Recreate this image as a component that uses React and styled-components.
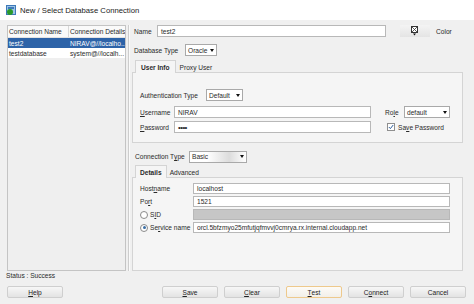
import React from 'react'
import styled, { createGlobalStyle } from 'styled-components'

//-- "New / Select Database Connection" dialog, shrunk to 474x304

const GlobalStyle = createGlobalStyle`
  html, body {
    margin: 0;
    padding: 0;
    background: #f0f0f0;
  }
  body {
    font-family: "Liberation Sans", Arial, sans-serif;
  }
`;

const Window = styled.div`
  width: 474px;
  height: 304px;
  background: #f0f0f0;
  display: flex;
  flex-direction: column;
  overflow: hidden;
  color: #2a2a2a;
  font-size: 6.6px;
`;

const TitleBar = styled.div`
  height: 20px;
  background: #fff;
  display: flex;
  align-items: center;
  gap: 3px;
  padding-left: 6px;
  font-size: 7.7px;
  color: #222;
`;

const Body = styled.div`
  flex: 1;
  display: flex;
  flex-direction: column;
  padding: 5px 8px 0 7px;
`;

const Main = styled.div`
  height: 246px;
  display: flex;
`;

const ListPanel = styled.div`
  width: 122px;
  border: 1px solid #c4c4c4;
  background: #efefef;
  display: flex;
  flex-direction: column;
`;

const ListHeader = styled.div`
  display: grid;
  grid-template-columns: 61px 1fr;
  height: 11px;
  background: #fafafa;
  border-bottom: 1px solid #e2e2e2;
  & > span {
    display: flex;
    align-items: center;
    padding-left: 1px;
    white-space: nowrap;
    overflow: hidden;
  }
  & > span:first-child {
    border-right: 1px solid #d8d8d8;
  }
`;

const ListRow = styled.div`
  display: grid;
  grid-template-columns: 61px 1fr;
  height: 10px;
  background: ${p => (p.selected ? '#2d63a8' : '#fff')};
  color: ${p => (p.selected ? '#fff' : '#2a2a2a')};
  & > span {
    display: flex;
    align-items: center;
    padding-left: 1px;
    white-space: nowrap;
    overflow: hidden;
  }
`;

const Splitter = styled.div`
  width: 6px;
  display: flex;
  justify-content: center;
  &::before {
    content: '';
    width: 1px;
    background: #cdcdcd;
    border-right: 1px solid #fafafa;
  }
`;

const RightPane = styled.div`
  flex: 1;
  display: flex;
  flex-direction: column;
`;

const Row = styled.div`
  display: flex;
  align-items: center;
  height: ${p => p.h || 12}px;
  margin-top: ${p => p.mt || 0}px;
  padding-left: ${p => p.pl || 0}px;
  flex-shrink: 0;
`;

const Label = styled.label`
  width: ${p => p.w}px;
  flex-shrink: 0;
  white-space: nowrap;
  display: flex;
  align-items: center;
`;

const Input = styled.div`
  width: ${p => p.w}px;
  height: ${p => p.h || 12}px;
  box-sizing: border-box;
  border: 1px solid #b8b8b8;
  background: ${p => (p.disabled ? '#c6c6c6' : '#fff')};
  display: flex;
  align-items: center;
  padding-left: 3px;
  white-space: nowrap;
  overflow: hidden;
  flex-shrink: 0;
`;

const Dots = styled.span`
  font-size: 8px;
  letter-spacing: -0.6px;
`;

const Combo = styled.div`
  width: ${p => p.w}px;
  height: 12px;
  box-sizing: border-box;
  border: 1px solid #a9a9a9;
  background: ${p => (p.shaded ? 'linear-gradient(90deg, #fff 30%, #dcdcdc 70%, #fff)' : '#fff')};
  display: flex;
  align-items: center;
  justify-content: space-between;
  gap: 2px;
  padding: 0 2px 0 2px;
  flex-shrink: 0;
  white-space: nowrap;
  &::after {
    content: '';
    flex-shrink: 0;
    border-left: 2.5px solid transparent;
    border-right: 2.5px solid transparent;
    border-top: 3px solid #111;
  }
`;

const ColorButton = styled.div`
  width: 30px;
  height: 12px;
  margin-left: 14px;
  background: linear-gradient(#f4f4f4, #e4e4e4);
  display: flex;
  align-items: center;
  justify-content: center;
  flex-shrink: 0;
`;

const TabBar = styled.div`
  display: flex;
  align-items: flex-end;
  height: 13px;
  margin-top: ${p => p.mt || 0}px;
  padding-left: 3px;
  flex-shrink: 0;
`;

const Tab = styled.div`
  height: ${p => (p.active ? 13 : 11)}px;
  box-sizing: border-box;
  display: flex;
  align-items: center;
  padding: 0 ${p => p.pad || 5}px;
  font-weight: ${p => (p.active ? 'bold' : 'normal')};
  border: ${p => (p.active ? '1px solid #d4d4d4' : '1px solid transparent')};
  border-bottom: none;
  background: ${p => (p.active ? '#f5f5f5' : 'transparent')};
  margin-bottom: ${p => (p.active ? -1 : 0)}px;
  position: relative;
  z-index: 1;
`;

const TabPanel = styled.div`
  height: ${p => (p.grow ? 'auto' : `${p.h}px`)};
  flex: ${p => (p.grow ? 1 : 'none')};
  margin-right: 3px;
  box-sizing: border-box;
  border: 1px solid #d4d4d4;
  background: #f5f5f5;
  padding: ${p => p.pt}px 0 0 7px;
  display: flex;
  flex-direction: column;
`;

const Check = styled.span`
  width: 8px;
  height: 8px;
  box-sizing: border-box;
  border: 1px solid #8f8f8f;
  background: #fff;
  display: inline-flex;
  align-items: center;
  justify-content: center;
  margin: 0 3px 0 16px;
`;

const Radio = styled.span`
  width: 8px;
  height: 8px;
  box-sizing: border-box;
  border-radius: 50%;
  border: 1px solid #8a8a8a;
  background: #fff;
  display: inline-flex;
  align-items: center;
  justify-content: center;
  margin-right: 2px;
  &::after {
    content: '';
    width: 3px;
    height: 3px;
    border-radius: 50%;
    background: ${p => (p.on ? '#3a6ea5' : 'transparent')};
  }
`;

const Status = styled.div`
  height: 9px;
  display: flex;
  align-items: center;
  margin-left: -1px;
`;

const ButtonBar = styled.div`
  display: flex;
  gap: 6px;
  margin-top: 6px;
`;

const Button = styled.div`
  width: 56px;
  height: 12px;
  box-sizing: border-box;
  border: 1px solid ${p => (p.focused ? '#eec98c' : '#cfcfcf')};
  border-radius: 2px;
  background: ${p => (p.focused ? 'linear-gradient(#fdfbf7, #f2efe9)' : 'linear-gradient(#f7f7f7, #e3e3e3)')};
  display: flex;
  align-items: center;
  justify-content: center;
  color: #222;
  margin-right: ${p => (p.spaced ? 93 : 0)}px;
`;

const TitleIcon = () => (
  <svg width="11" height="11" viewBox="0 0 11 11">
    <rect x="0.5" y="0.5" width="9" height="9" fill="#9cc3e6" stroke="#3d79b8" />
    <rect x="2" y="2" width="6" height="2" fill="#3d79b8" />
    <circle cx="4" cy="7" r="3" fill="#2a9a2a" />
  </svg>
);

const ColorIcon = () => (
  <svg width="10" height="10" viewBox="0 0 10 10">
    <rect x="1.5" y="0.5" width="6" height="6" fill="#fff" stroke="#333" />
    <path d="M2 1 L7 6 M7 1 L2 6" stroke="#333" strokeWidth="0.8" />
    <path d="M3 7.5 L6 7.5 L4.5 9.5 Z" fill="#111" />
  </svg>
);

const Tick = () => (
  <svg width="6" height="6" viewBox="0 0 6 6">
    <path d="M0.8 3 L2.4 4.6 L5.2 1" fill="none" stroke="#2f5f9e" strokeWidth="1" />
  </svg>
);

export default function App() {
  return (
    <>
      <GlobalStyle />
      <Window>
        <TitleBar>
          <TitleIcon />
          New / Select Database Connection
        </TitleBar>
        <Body>
          <Main>
            <ListPanel>
              <ListHeader>
                <span>Connection Name</span>
                <span>Connection Details</span>
              </ListHeader>
              <ListRow selected>
                <span>test2</span>
                <span>NIRAV@//localho...</span>
              </ListRow>
              <ListRow>
                <span>testdatabase</span>
                <span>system@//localh...</span>
              </ListRow>
            </ListPanel>
            <Splitter />
            <RightPane>
              <Row pl={2}>
                <Label w={23}>Name</Label>
                <Input w={229}>test2</Input>
                <ColorButton><ColorIcon /></ColorButton>
                <Label w={30} style={{ marginLeft: 6 }}>Color</Label>
              </Row>
              <Row pl={2} mt={7}>
                <Label w={51}>Database Type</Label>
                <Combo w={32}>Oracle</Combo>
              </Row>
              <TabBar mt={3}>
                <Tab active>User Info</Tab>
                <Tab pad={3}>Proxy User</Tab>
              </TabBar>
              <TabPanel h={71} pt={16}>
                <Row>
                  <Label w={66}>Authentication Type</Label>
                  <Combo w={37}>Default</Combo>
                </Row>
                <Row mt={5}>
                  <Label w={34}><u>U</u>sername</Label>
                  <Input w={197}>NIRAV</Input>
                  <Label w={19} style={{ marginLeft: 14 }}>Ro<u>l</u>e</Label>
                  <Combo w={46}>default</Combo>
                </Row>
                <Row mt={3}>
                  <Label w={34}><u>P</u>assword</Label>
                  <Input w={197}><Dots>••••</Dots></Input>
                  <Check><Tick /></Check>
                  Sa<u>v</u>e Password
                </Row>
              </TabPanel>
              <Row pl={3} mt={7} h={13}>
                <Label w={54}>Connection T<u>y</u>pe</Label>
                <Combo w={58} shaded>Basic</Combo>
              </Row>
              <TabBar mt={1}>
                <Tab active pad={4}>Details</Tab>
                <Tab pad={2}>Advanced</Tab>
              </TabBar>
              <TabPanel grow pt={5}>
                <Row h={11}>
                  <Label w={53}>Host<u>n</u>ame</Label>
                  <Input w={257} h={11}>localhost</Input>
                </Row>
                <Row h={11} mt={2}>
                  <Label w={53}>Po<u>r</u>t</Label>
                  <Input w={257} h={11}>1521</Input>
                </Row>
                <Row h={11} mt={2}>
                  <Label w={53}><Radio />S<u>I</u>D</Label>
                  <Input w={257} h={11} disabled />
                </Row>
                <Row h={11} mt={2}>
                  <Label w={53}><Radio on />Se<u>r</u>vice name</Label>
                  <Input w={257} h={11}>orcl.5bfzmyo25mfutjqfmvvj0cmrya.rx.internal.cloudapp.net</Input>
                </Row>
              </TabPanel>
            </RightPane>
          </Main>
          <Status>Status : Success</Status>
          <ButtonBar>
            <Button spaced><u>H</u>elp</Button>
            <Button><u>S</u>ave</Button>
            <Button><u>C</u>lear</Button>
            <Button focused><u>T</u>est</Button>
            <Button>C<u>o</u>nnect</Button>
            <Button>Cancel</Button>
          </ButtonBar>
        </Body>
      </Window>
    </>
  );
}
